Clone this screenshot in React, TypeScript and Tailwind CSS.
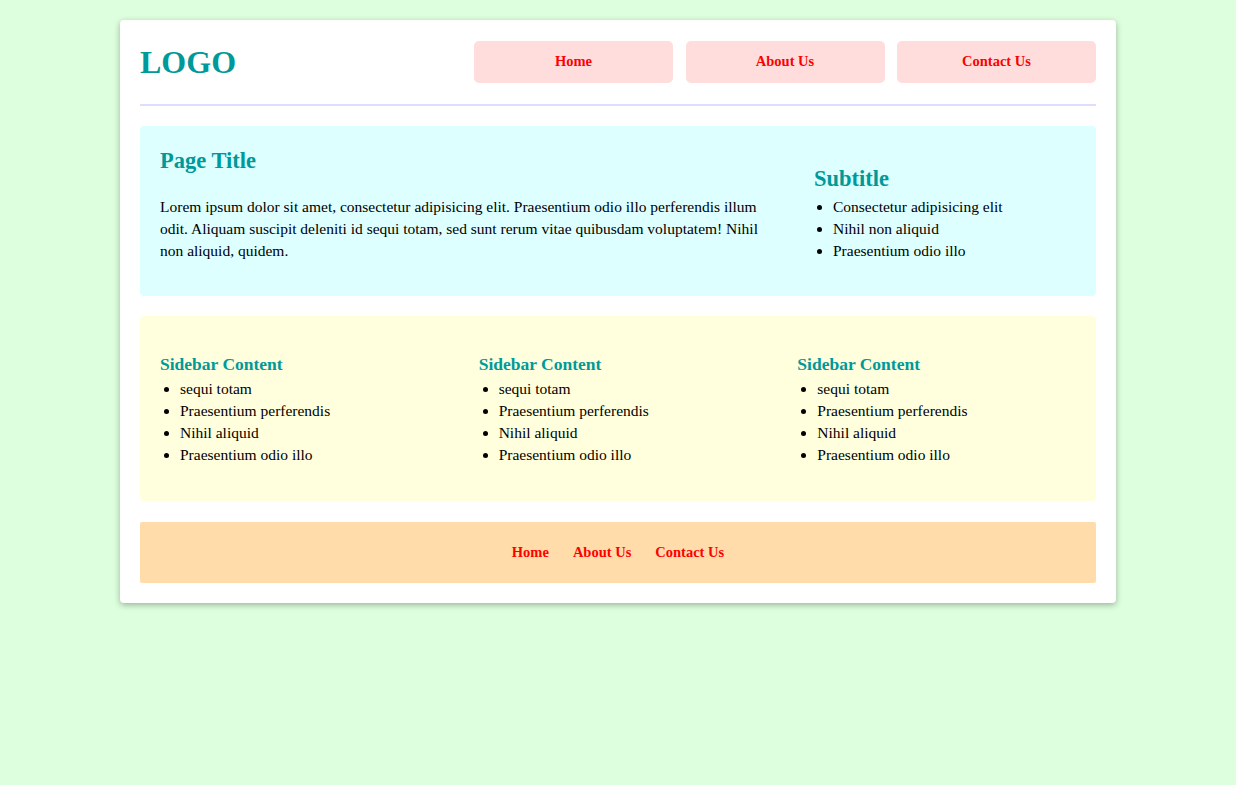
import React from "react";

const serif = { fontFamily: '"Liberation Serif", "Times New Roman", serif' };

function SidebarCol() {
  return (
    <div className="p-5">
      <h3 className="mt-[18px] mb-0 text-[17.5px] font-bold leading-[20px] text-[#009999]">Sidebar Content</h3>
      <ul className="mt-[4px] mb-[15px] list-disc pl-[20px] text-[15.5px] leading-[22px] text-black">
        <li>sequi totam</li>
        <li>Praesentium perferendis</li>
        <li>Nihil aliquid</li>
        <li>Praesentium odio illo</li>
      </ul>
    </div>
  );
}

export default function App() {
  return (
    <div className="min-h-[785px] w-full bg-[#ddffdd] pt-5" style={serif}>
      <div className="mx-auto w-[996px] rounded-[4px] bg-white p-5 shadow-[0_2px_6px_rgba(0,0,0,0.3)]">
        <header className="flex items-center justify-between border-b-2 border-[#ddddff] pb-[21px] pt-[1px]">
          <div className="text-[32px] font-bold leading-[42px] text-[#009999]">LOGO</div>
          <nav className="flex gap-[12.5px]">
            {["Home", "About Us", "Contact Us"].map((t) => (
              <a
                key={t}
                className="flex h-[42px] w-[199px] items-center justify-center rounded-[5px] bg-[#ffdddd] text-[14.5px] font-bold text-[#ff0000]"
              >
                {t}
              </a>
            ))}
          </nav>
        </header>

        <section className="mt-[20px] flex items-end rounded-[4px] bg-[#ddffff] px-5 pt-[19px] pb-5">
          <div className="w-[614px]">
            <h2 className="mt-[2px] text-[22.5px] font-bold leading-[28px] text-[#009999]">Page Title</h2>
            <p className="mt-[21px] mb-[14px] text-[15.5px] leading-[22px] text-black">
              Lorem ipsum dolor sit amet, consectetur adipisicing elit. Praesentium odio illo perferendis illum odit. Aliquam suscipit deleniti id sequi totam, sed sunt rerum vitae quibusdam voluptatem! Nihil non aliquid, quidem.
            </p>
          </div>
          <div className="ml-[40px] flex-1">
            <h2 className="mb-[3px] text-[22.5px] font-bold leading-[28px] text-[#009999]">Subtitle</h2>
            <ul className="mt-0 mb-[14px] list-disc pl-[19px] text-[15.5px] leading-[22px] text-black">
              <li>Consectetur adipisicing elit</li>
              <li>Nihil non aliquid</li>
              <li>Praesentium odio illo</li>
            </ul>
          </div>
        </section>

        <section className="mt-[20px] grid grid-cols-3 rounded-[4px] bg-[#ffffdd]">
          <SidebarCol />
          <SidebarCol />
          <SidebarCol />
        </section>

        <footer className="mt-[21px] flex h-[61px] items-center justify-center gap-[24px] rounded-[2px] bg-[#ffdcaa]">
          {["Home", "About Us", "Contact Us"].map((t) => (
            <a key={t} className="text-[14.5px] font-bold text-[#ff0000]">
              {t}
            </a>
          ))}
        </footer>
      </div>
    </div>
  );
}
